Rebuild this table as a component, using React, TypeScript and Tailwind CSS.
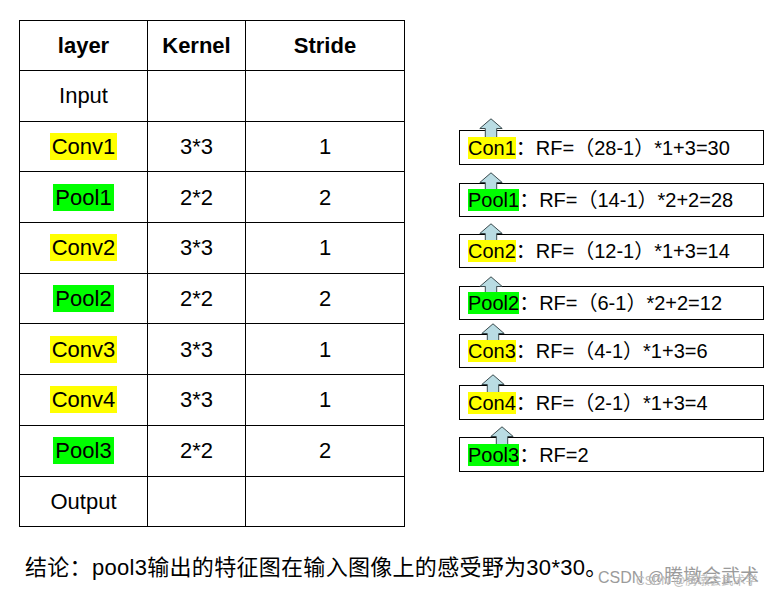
const rows = [
  { layer: "Input", kernel: "", stride: "" },
  { layer: "Conv1", kernel: "3*3", stride: "1", hl: "y" },
  { layer: "Pool1", kernel: "2*2", stride: "2", hl: "g" },
  { layer: "Conv2", kernel: "3*3", stride: "1", hl: "y" },
  { layer: "Pool2", kernel: "2*2", stride: "2", hl: "g" },
  { layer: "Conv3", kernel: "3*3", stride: "1", hl: "y" },
  { layer: "Conv4", kernel: "3*3", stride: "1", hl: "y" },
  { layer: "Pool3", kernel: "2*2", stride: "2", hl: "g" },
  { layer: "Output", kernel: "", stride: "" },
];

const boxes = [
  { name: "Con1", hl: "y", rf: "RF=（28-1）*1+3=30", mt: "mt-[130px]", h: "h-[35px]", arrow: "left-[19px] -top-[13px]" },
  { name: "Pool1", hl: "g", rf: "RF=（14-1）*2+2=28", mt: "mt-[18px]", h: "h-[34px]", arrow: "left-[19px] -top-[12px]" },
  { name: "Con2", hl: "y", rf: "RF=（12-1）*1+3=14", mt: "mt-[17px]", h: "h-[34px]", arrow: "left-[19px] -top-[12px]" },
  { name: "Pool2", hl: "g", rf: "RF=（6-1）*2+2=12", mt: "mt-[18px]", h: "h-[34px]", arrow: "left-[19px] -top-[11px]" },
  { name: "Con3", hl: "y", rf: "RF=（4-1）*1+3=6", mt: "mt-[14px]", h: "h-[34px]", arrow: "left-[21px] -top-[12px]" },
  { name: "Con4", hl: "y", rf: "RF=（2-1）*1+3=4", mt: "mt-[17px]", h: "h-[35px]", arrow: "left-[21px] -top-[12px]" },
  { name: "Pool3", hl: "g", rf: "RF=2", mt: "mt-[17px]", h: "h-[35px]", arrow: "left-[30px] -top-[12px]" },
];

function UpArrow({ className }: { className: string }) {
  return (
    <svg className={`absolute ${className}`} width="24" height="23" viewBox="0 0 24 23">
      <path d="M12 0.8 L23.2 10.5 L17.7 10.5 L17.7 22.5 L6.3 22.5 L6.3 10.5 L0.8 10.5 Z" fill="#b9dce3" stroke="#3a4a4e" strokeWidth="1" />
    </svg>
  );
}

export default function App() {
  return (
    <div className="relative w-[782px] h-[595px] bg-white text-black font-['Liberation_Sans','Noto_Sans_CJK_SC',sans-serif] overflow-hidden">
      <div className="flex">
        <table className="ml-[19px] mt-[20px] border-collapse border border-black text-[22px]">
          <thead>
            <tr className="h-[50px]">
              <th className="w-[128px] border border-black font-bold">layer</th>
              <th className="w-[98px] border border-black font-bold">Kernel</th>
              <th className="w-[159px] border border-black font-bold">Stride</th>
            </tr>
          </thead>
          <tbody>
            {rows.map((r) => (
              <tr key={r.layer} className="h-[50.7px]">
                <td className="border border-black text-center">
                  <span className={`px-[2px] leading-[27px] inline-block ${r.hl === "y" ? "bg-[#ffff00]" : r.hl === "g" ? "bg-[#00ff00]" : ""}`}>
                    {r.layer}
                  </span>
                </td>
                <td className="border border-black text-center">{r.kernel}</td>
                <td className="border border-black text-center">{r.stride}</td>
              </tr>
            ))}
          </tbody>
        </table>

        <div className="ml-[54px] flex flex-col">
          {boxes.map((b) => (
            <div key={b.name} className={`relative w-[305px] ${b.h} ${b.mt} border border-black flex items-center pl-[8px] text-[20px]`}>
              <UpArrow className={b.arrow} />
              <span className={`relative leading-[22px] ${b.hl === "y" ? "bg-[#ffff00]" : "bg-[#00ff00]"}`}>{b.name}</span>
              <span className="relative">：</span>
              <span className="relative">{b.rf}</span>
            </div>
          ))}
        </div>
      </div>

      <div className="mt-[27px] ml-[25px] text-[22px] tracking-[0.3px] leading-[28px]">
        结论：pool3输出的特征图在输入图像上的感受野为30*30。
      </div>

      <div className="absolute left-[598px] top-[566px] text-[#9b9b9b] leading-[22px] whitespace-nowrap">
        <span className="text-[16px]">CSDN @</span>
        <span className="text-[19px]">腾墩会武术</span>
      </div>
      <div className="absolute left-[636px] top-[573px] text-[#bdbdbd] text-[12px] leading-[16px] whitespace-nowrap">
        CSDN @腾墩会武术学
      </div>
    </div>
  );
}
